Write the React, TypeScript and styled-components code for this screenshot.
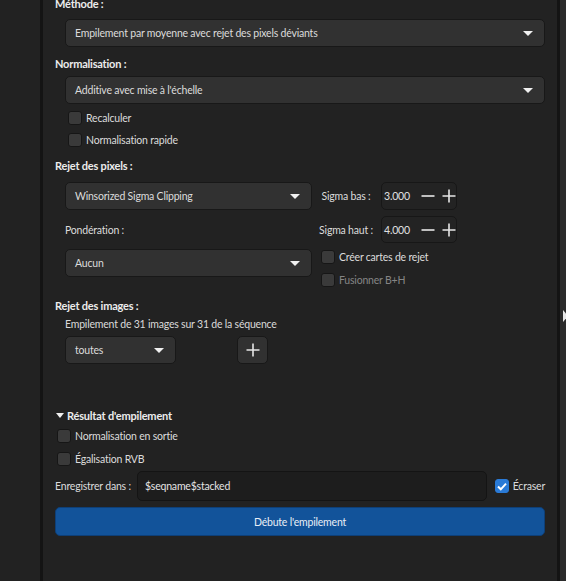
import React from "react";
import styled, { createGlobalStyle } from "styled-components";

const GlobalStyle = createGlobalStyle`
  html, body {
    margin: 0;
    padding: 0;
    background: #222222;
    overflow: hidden;
  }
  body {
    font-family: Lato, "Noto Sans", sans-serif;
    font-size: 10.5px;
    letter-spacing: -0.2px;
    color: #dadada;
  }
`;

const Page = styled.div`
  display: flex;
  width: 566px;
  height: 581px;
  overflow: hidden;
`;

const SideStrip = styled.div<{ $w: number; $bg: string }>`
  width: ${(p) => p.$w}px;
  flex: none;
  background: ${(p) => p.$bg};
  position: relative;
`;

const EdgeArrow = styled.div`
  position: absolute;
  left: 3px;
  top: 310px;
  width: 0;
  height: 0;
  border-top: 6px solid transparent;
  border-bottom: 6px solid transparent;
  border-left: 5px solid #e8e8e8;
`;

const Main = styled.div`
  flex: 1;
  background: #222222;
  padding: 0 12px;
  display: flex;
  flex-direction: column;
  overflow: hidden;
`;

const Content = styled.div`
  margin-top: -3px;
  display: flex;
  flex-direction: column;
`;

const SectionLabel = styled.div<{ $mt?: number }>`
  font-weight: 700;
  font-size: 11px;
  color: #ececec;
  height: 14px;
  line-height: 14px;
  margin-top: ${(p) => p.$mt ?? 0}px;
`;

const Indent = styled.div<{ $mt?: number; $pl?: number }>`
  padding-left: ${(p) => p.$pl ?? 10}px;
  margin-top: ${(p) => p.$mt ?? 0}px;
  display: flex;
  flex-direction: column;
`;

const Combo = styled.div<{ $w?: number; $h?: number }>`
  box-sizing: border-box;
  height: ${(p) => p.$h ?? 28}px;
  width: ${(p) => (p.$w ? `${p.$w}px` : "100%")};
  background: #313131;
  border: 1px solid #181818;
  border-radius: 5px;
  display: flex;
  align-items: center;
  padding: 0 11px 0 9px;
  color: #dcdcdc;
  flex: none;
`;

const ComboText = styled.span`
  flex: 1;
  white-space: nowrap;
`;

const DropArrow = styled.span`
  width: 0;
  height: 0;
  border-left: 5px solid transparent;
  border-right: 5px solid transparent;
  border-top: 5px solid #f0f0f0;
`;

const CheckRow = styled.label<{ $mt?: number; $disabled?: boolean }>`
  display: flex;
  align-items: center;
  gap: 4px;
  height: 14px;
  margin-top: ${(p) => p.$mt ?? 0}px;
  color: ${(p) => (p.$disabled ? "#858585" : "#dcdcdc")};
  white-space: nowrap;
`;

const Box = styled.span<{ $checked?: boolean }>`
  box-sizing: border-box;
  width: 14px;
  height: 14px;
  border-radius: 3px;
  flex: none;
  background: ${(p) => (p.$checked ? "#2a7ad6" : "#3a3a3a")};
  border: 1px solid ${(p) => (p.$checked ? "#2a7ad6" : "#161616")};
  display: flex;
  align-items: center;
  justify-content: center;
`;

const PixelGrid = styled.div`
  display: flex;
  margin-top: 9px;
`;

const LeftCol = styled.div`
  width: 247px;
  display: flex;
  flex-direction: column;
`;

const SubLabel = styled.div`
  height: 39px;
  display: flex;
  align-items: center;
  color: #dcdcdc;
`;

const RightCol = styled.div`
  margin-left: 6px;
  display: flex;
  flex-direction: column;
`;

const SpinRow = styled.div<{ $mt?: number }>`
  display: flex;
  align-items: center;
  margin-top: ${(p) => p.$mt ?? 0}px;
`;

const SpinLabel = styled.span`
  width: 56px;
  text-align: center;
  margin-right: 7px;
  white-space: nowrap;
  color: #dcdcdc;
`;

const SpinBox = styled.div<{ $h: number }>`
  box-sizing: border-box;
  width: 76px;
  height: ${(p) => p.$h}px;
  border: 1px solid #171717;
  border-radius: 5px;
  background: #232323;
  display: flex;
  align-items: center;
  padding-left: 2px;
`;

const SpinValue = styled.span`
  width: 37px;
  color: #e0e0e0;
`;

const SpinIcons = styled.span`
  display: flex;
  gap: 7px;
  align-items: center;
`;

const ImagesRow = styled.div`
  display: flex;
  align-items: center;
  margin-top: 6px;
  gap: 61px;
`;

const IconButton = styled.div`
  box-sizing: border-box;
  width: 31px;
  height: 28px;
  background: #313131;
  border: 1px solid #181818;
  border-radius: 5px;
  display: flex;
  align-items: center;
  justify-content: center;
`;

const Expander = styled.div`
  display: flex;
  align-items: center;
  gap: 3px;
  font-weight: 700;
  font-size: 11px;
  color: #ececec;
  height: 14px;
  margin-top: 44px;
  padding-left: 1px;
`;

const ExpandArrow = styled.span`
  width: 0;
  height: 0;
  border-left: 4px solid transparent;
  border-right: 4px solid transparent;
  border-top: 5px solid #f0f0f0;
`;

const ResultBody = styled.div`
  padding-left: 2px;
  display: flex;
  flex-direction: column;
  margin-top: 7px;
`;

const SaveRow = styled.div`
  display: flex;
  align-items: center;
  margin-top: 5px;
`;

const SaveLabel = styled.span`
  width: 82px;
  white-space: nowrap;
  color: #dcdcdc;
`;

const TextInput = styled.div`
  box-sizing: border-box;
  width: 350px;
  height: 30px;
  background: #1d1d1d;
  border: 1px solid #141414;
  border-radius: 5px;
  display: flex;
  align-items: center;
  padding-left: 7px;
  color: #e4e4e4;
`;

const Overwrite = styled(CheckRow)`
  margin-left: 8px;
`;

const PrimaryButton = styled.div`
  box-sizing: border-box;
  height: 29px;
  margin-top: 6px;
  background: #12539a;
  border: 1px solid #0e3f77;
  border-radius: 5px;
  display: flex;
  align-items: center;
  justify-content: center;
  color: #e8eef6;
`;

const Minus = () => (
  <svg width="14" height="14" viewBox="0 0 14 14">
    <path d="M0.5 7h13" stroke="#e6e6e6" strokeWidth="1.6" />
  </svg>
);

const Plus = ({ size = 14 }: { size?: number }) => (
  <svg width={size} height={size} viewBox="0 0 14 14">
    <path d="M0.5 7h13M7 0.5v13" stroke="#e6e6e6" strokeWidth="1.6" />
  </svg>
);

const Check = () => (
  <svg width="10" height="9" viewBox="0 0 10 9">
    <path d="M1 4.5l2.8 2.8L9 1.6" fill="none" stroke="#fff" strokeWidth="2" />
  </svg>
);

const Checkbox = ({
  label,
  checked,
  disabled,
  mt,
}: {
  label: string;
  checked?: boolean;
  disabled?: boolean;
  mt?: number;
}) => (
  <CheckRow $mt={mt} $disabled={disabled}>
    <Box $checked={checked}>{checked && <Check />}</Box>
    {label}
  </CheckRow>
);

const Select = ({ text, w }: { text: string; w?: number }) => (
  <Combo $w={w}>
    <ComboText>{text}</ComboText>
    <DropArrow />
  </Combo>
);

export default function App() {
  return (
    <>
      <GlobalStyle />
      <Page>
        <SideStrip $w={40} $bg="#222222" />
        <SideStrip $w={3} $bg="#141414" />
        <Main>
          <Content>
            <SectionLabel>Méthode :</SectionLabel>
            <Indent $mt={8}>
              <Select text="Empilement par moyenne avec rejet des pixels déviants" />
            </Indent>

            <SectionLabel $mt={10}>Normalisation :</SectionLabel>
            <Indent $mt={5}>
              <Select text="Additive avec mise à l'échelle" />
              <Indent $mt={7} $pl={3}>
                <Checkbox label="Recalculer" />
                <Checkbox label="Normalisation rapide" mt={8} />
              </Indent>
            </Indent>

            <SectionLabel $mt={12}>Rejet des pixels :</SectionLabel>
            <Indent>
              <PixelGrid>
                <LeftCol>
                  <Select text="Winsorized Sigma Clipping" />
                  <SubLabel>Pondération :</SubLabel>
                  <Select text="Aucun" />
                </LeftCol>
                <RightCol>
                  <SpinRow>
                    <SpinLabel>Sigma bas :</SpinLabel>
                    <SpinBox $h={28}>
                      <SpinValue>3.000</SpinValue>
                      <SpinIcons>
                        <Minus />
                        <Plus />
                      </SpinIcons>
                    </SpinBox>
                  </SpinRow>
                  <SpinRow $mt={6}>
                    <SpinLabel>Sigma haut :</SpinLabel>
                    <SpinBox $h={27}>
                      <SpinValue>4.000</SpinValue>
                      <SpinIcons>
                        <Minus />
                        <Plus />
                      </SpinIcons>
                    </SpinBox>
                  </SpinRow>
                  <Indent $mt={7} $pl={3}>
                    <Checkbox label="Créer cartes de rejet" />
                    <Checkbox label="Fusionner B+H" disabled mt={9} />
                  </Indent>
                </RightCol>
              </PixelGrid>
            </Indent>

            <SectionLabel $mt={12}>Rejet des images :</SectionLabel>
            <Indent $mt={5}>
              <div>Empilement de 31 images sur 31 de la séquence</div>
              <ImagesRow>
                <Select text="toutes" w={111} />
                <IconButton>
                  <Plus size={14} />
                </IconButton>
              </ImagesRow>
            </Indent>

            <Expander>
              <ExpandArrow />
              Résultat d'empilement
            </Expander>
            <ResultBody>
              <Checkbox label="Normalisation en sortie" />
              <Checkbox label="Égalisation RVB" mt={9} />
            </ResultBody>

            <SaveRow>
              <SaveLabel>Enregistrer dans :</SaveLabel>
              <TextInput>$seqname$stacked</TextInput>
              <Overwrite>
                <Box $checked>
                  <Check />
                </Box>
                Écraser
              </Overwrite>
            </SaveRow>

            <PrimaryButton>Débute l'empilement</PrimaryButton>
          </Content>
        </Main>
        <SideStrip $w={3} $bg="#141414" />
        <SideStrip $w={6} $bg="#2b2b2b">
          <EdgeArrow />
        </SideStrip>
      </Page>
    </>
  );
}
